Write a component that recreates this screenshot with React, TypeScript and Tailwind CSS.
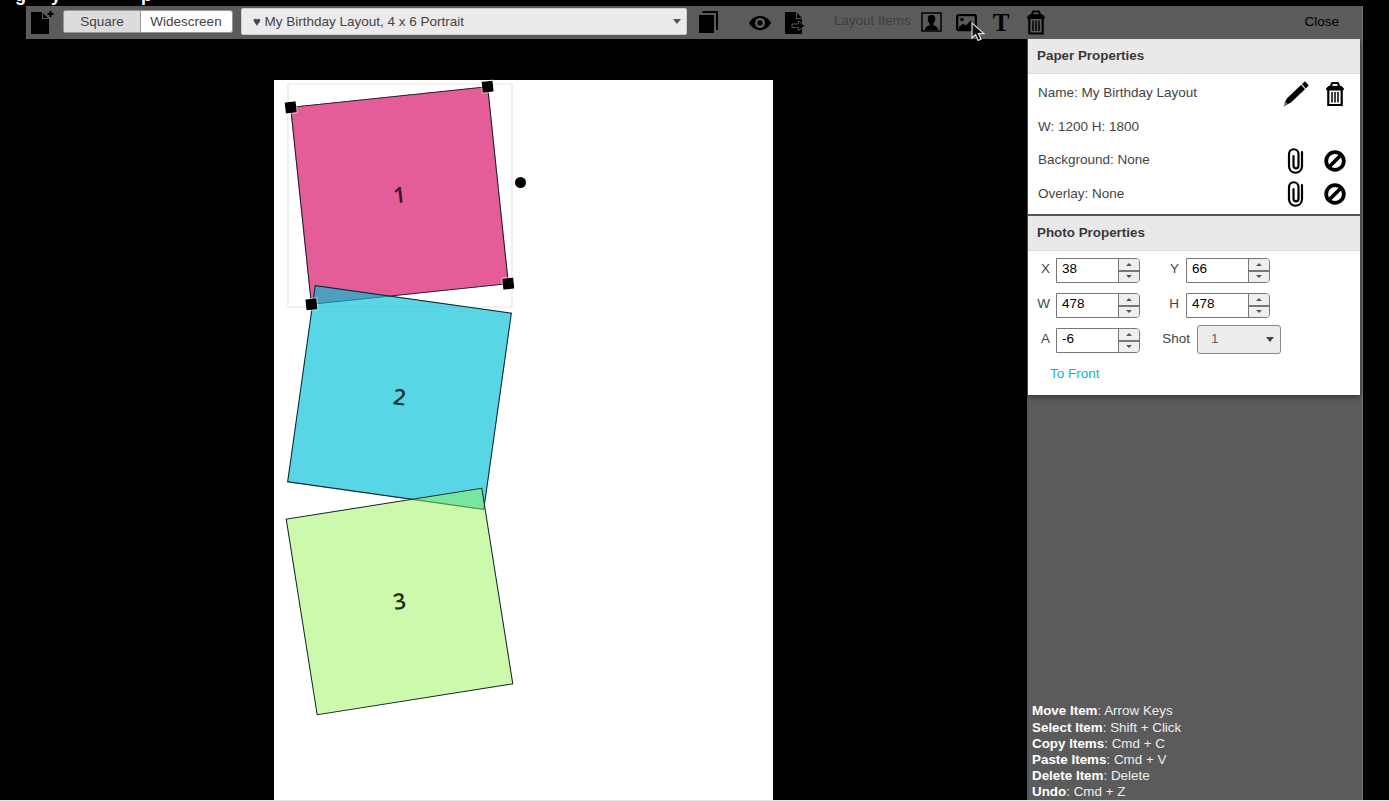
import type { ReactNode } from 'react';
import { clsx } from 'clsx';

type Photo = {
  shot: number;
  box: string;
  fill: string;
  label: string;
};

const photos: Photo[] = [
  { shot: 1, box: 'left-[26px] top-[16px] -rotate-6', fill: 'bg-[#e55d98]', label: 'text-[#3d1228]' },
  { shot: 2, box: 'left-[26px] top-[218px] rotate-8', fill: 'bg-[#00c0d8]/65', label: 'text-[#0b3338]' },
  { shot: 3, box: 'left-[26px] top-[422px] -rotate-9', fill: 'bg-[#9cf45a]/50', label: 'text-[#1c2b12]' },
];

const shortcuts = [
  ['Move Item', 'Arrow Keys'],
  ['Select Item', 'Shift + Click'],
  ['Copy Items', 'Cmd + C'],
  ['Paste Items', 'Cmd + V'],
  ['Delete Item', 'Delete'],
  ['Undo', 'Cmd + Z'],
];

export default function App() {
  return (
    <div className="flex h-[801px] w-[1389px] flex-col overflow-hidden border-b border-[#e4e4e4] bg-black font-['Liberation_Sans',Arial,sans-serif] text-[13.5px] text-[#444]">
      {/* Tail end of the page title, scrolled off the top */}
      <div className="flex h-[6px] shrink-0 items-end overflow-hidden pb-[2px] pl-[15px] text-[18px] leading-[18px] font-bold text-white">
        <span className="w-[36px]">g</span>
        <span className="w-[90px]">y</span>
        <span>p</span>
      </div>
      <div className="ml-[26px] flex min-h-0 w-[1337px] flex-1 flex-col border-r border-[#777]">
        <Toolbar />
        <div className="flex min-h-0 flex-1">
          <Canvas />
          <Sidebar />
        </div>
      </div>
    </div>
  );
}

function Toolbar() {
  return (
    <header className="relative flex h-[33px] shrink-0 items-center bg-[#5b5b5b] pb-[2px] text-black">
      <NewPageIcon className="mt-px ml-[4px] h-[25px] w-[25px]" />
      <div className="ml-[8px] flex h-[23px] w-[170px] overflow-hidden rounded-[3px] border border-[#999] bg-white leading-[21px] text-[#444]">
        <button className="w-[77px] border-r border-[#999] bg-[#dcdcdc]">Square</button>
        <button className="flex-1 pr-px">Widescreen</button>
      </div>
      <button className="ml-[8px] flex h-[27px] w-[446px] items-center justify-between rounded-[2px] border border-[#ccc] bg-[#ebebeb] pr-[5px] pl-[11px] text-[#444]">
        <span className="pt-px"><span className="text-[13px]">♥</span> My Birthday Layout, 4 x 6 Portrait</span>
        <Caret className="h-[5px] w-[8px] text-[#555]" />
      </button>
      <CopyIcon className="mt-px ml-[11px] h-[24px] w-[22px]" />
      <EyeIcon className="mt-[2px] ml-[28px] h-[18px] w-[24px]" />
      <ExportIcon className="mt-[2px] ml-[12px] h-[24px] w-[22px]" />
      <span className="ml-[28px] w-[87px] text-[13.4px] text-[#3e3e3e]">Layout Items</span>
      <PortraitIcon className="mt-px h-[20px] w-[21px]" />
      <ImageIcon className="mt-[2px] ml-[14px] h-[19px] w-[21px]" />
      <span className="mt-[3px] ml-[14px] w-[20px] text-center font-['Liberation_Serif',serif] text-[25px] leading-[24px] font-bold">T</span>
      <TrashIcon className="mt-[2px] ml-[16px] h-[25px] w-[18px]" />
      <button className="mt-px mr-[23px] ml-auto">Close</button>
      <svg className="absolute top-[16px] left-[945px] h-[20px] w-[14px]" viewBox="0 0 14 20">
        <path d="M1 1v15l3.6-3.4L7 18.4l3-1.2-2.5-5.6H13z" fill="#111" stroke="#ddd" strokeWidth="1.2" />
      </svg>
    </header>
  );
}

function Canvas() {
  return (
    <main className="min-w-0 flex-1 pt-[41px] pl-[248px]">
      <div className="relative h-full w-[499px] bg-white">
        {photos.map((photo) => (
          <div
            key={photo.shot}
            className={clsx(
              'absolute flex h-[199px] w-[199px] items-center justify-center border border-[#12222a]',
              photo.box,
              photo.fill
            )}
          >
            <span className={clsx("pb-[4px] font-['Open_Sans',sans-serif] text-[22px] leading-none font-semibold", photo.label)}>
              {photo.shot}
            </span>
          </div>
        ))}
        <div className="absolute top-[3px] left-[13px] h-[225px] w-[226px] border-2 border-[#888]/12" />
        {/* Handles follow the rotation of the selected photo */}
        <div className="absolute top-[16px] left-[26px] h-[199px] w-[199px] -rotate-6">
          <Handle className="-top-[5px] -left-[5px]" />
          <Handle className="-top-[5px] -right-[5px]" />
          <Handle className="-bottom-[5px] -left-[5px]" />
          <Handle className="-right-[5px] -bottom-[5px]" />
        </div>
        <div className="absolute top-[97px] left-[241px] h-[11px] w-[11px] rounded-full bg-black" />
      </div>
    </main>
  );
}

function Handle({ className }: { className: string }) {
  return <div className={clsx('absolute h-[11px] w-[11px] bg-black outline-1 outline-white/50', className)} />;
}

function Sidebar() {
  return (
    <aside className="flex w-[335px] shrink-0 flex-col border-l border-[#555] bg-[#5b5b5b]">
      <div className="h-[356px] w-[332px] bg-white shadow-[0_2px_6px_rgba(0,0,0,0.45)]">
        <PanelTitle>Paper Properties</PanelTitle>
        <div className="flex h-[142px] flex-col border-b-2 border-[#555] pt-[3px] pl-[10px]">
          <PropertyRow label="Name: My Birthday Layout">
            <PencilIcon className="h-[26px] w-[26px]" />
            <TrashIcon className="ml-px h-[26px] w-[18px]" />
          </PropertyRow>
          <PropertyRow label="W: 1200 H: 1800" />
          <PropertyRow label="Background: None">
            <ClipIcon className="h-[26px] w-[17px]" />
            <BanIcon className="h-[22px] w-[22px]" />
          </PropertyRow>
          <PropertyRow label="Overlay: None">
            <ClipIcon className="h-[26px] w-[17px]" />
            <BanIcon className="h-[22px] w-[22px]" />
          </PropertyRow>
        </div>
        <PanelTitle>Photo Properties</PanelTitle>
        <div className="grid grid-cols-[112px_1fr] gap-y-[10px] pt-[7px]">
          <Spinner label="X" value="38" />
          <Spinner label="Y" value="66" wide />
          <Spinner label="W" value="478" />
          <Spinner label="H" value="478" wide />
          <Spinner label="A" value="-6" />
          <div className="flex h-[25px] items-center">
            <span className="w-[57px] pr-[7px] pb-[2px] text-right">Shot</span>
            <button className="relative -top-px flex h-[29px] w-[84px] items-center justify-between rounded-[3px] border border-[#888] bg-[#ececec] pr-[6px] pl-[13px] text-[#666]">
              1
              <Caret className="h-[5px] w-[8px] text-[#444]" />
            </button>
          </div>
        </div>
        <button className="mt-[11px] ml-[22px] block leading-[20px] text-[#12b5c8]">To Front</button>
      </div>
      <div className="mt-auto pl-[4px] text-[13.4px] leading-[16.1px] text-[#eee]">
        {shortcuts.map(([action, keys]) => (
          <p key={action}>
            <b className="text-white">{action}</b>: {keys}
          </p>
        ))}
      </div>
    </aside>
  );
}

function PanelTitle({ children }: { children: ReactNode }) {
  return (
    <h2 className="h-[35px] border-b border-[#ddd] bg-[#e9e9ea] pl-[9px] text-[13.4px] leading-[34px] font-bold text-[#3a3a3a]">
      {children}
    </h2>
  );
}

function PropertyRow({ label, children }: { label: string; children?: ReactNode }) {
  return (
    <div className="flex h-[33.5px] items-center">
      <span className="flex-1 pb-px">{label}</span>
      {children && (
        <div className="mr-[6px] grid grid-cols-[39px_39px] place-items-center text-black">{children}</div>
      )}
    </div>
  );
}

function Spinner({ label, value, wide }: { label: string; value: string; wide?: boolean }) {
  return (
    <div className="flex h-[25px] items-center">
      <span className={clsx('pb-[2px] text-right', wide ? 'w-[40px] pr-px' : 'w-[28px] pr-[6px]')}>{label}</span>
      <div
        className={clsx(
          'flex h-[25px] w-[84px] overflow-hidden rounded-r-[4px] border border-[#777] bg-white',
          wide && 'ml-[6px]'
        )}
      >
        <span className="flex-1 pl-[5px] leading-[20px] text-black">{value}</span>
        <div className="flex w-[21px] flex-col border-l border-[#777] bg-[#eee] text-[#555]">
          <span className="flex flex-1 items-center justify-center border-b-2 border-[#777]">
            <Caret className="h-[3px] w-[6px] rotate-180" />
          </span>
          <span className="flex flex-1 items-center justify-center">
            <Caret className="h-[3px] w-[6px]" />
          </span>
        </div>
      </div>
    </div>
  );
}

type IconProps = { className?: string };

function Caret({ className }: IconProps) {
  return (
    <svg className={className} viewBox="0 0 8 5" preserveAspectRatio="none" fill="currentColor">
      <path d="M0 0h8L4 5z" />
    </svg>
  );
}

function NewPageIcon({ className }: IconProps) {
  return (
    <svg className={className} viewBox="0 0 25 25" fill="currentColor">
      <path d="M1 2h11v7h7v15H1zM13 3l5 5h-5zM19.500 1h2v2h2v2h-2v2h-2V5h-2V3h2z" />
    </svg>
  );
}

function CopyIcon({ className }: IconProps) {
  return (
    <svg className={className} viewBox="0 0 22 24" fill="currentColor">
      <path d="M1 5h15v18H1z" />
      <path d="M4.500 2h14.500V20" fill="none" stroke="currentColor" strokeWidth="2" />
      <path d="M3 4.200h14V20" fill="none" stroke="#5b5b5b" strokeWidth=".6" />
    </svg>
  );
}

function EyeIcon({ className }: IconProps) {
  return (
    <svg className={className} viewBox="0 0 24 18">
      <path d="M1 9C6-.5 18-.5 23 9 18 18.500 6 18.500 1 9z" fill="currentColor" />
      <circle cx="12" cy="9" r="4.800" fill="#777" />
      <circle cx="12" cy="9" r="2.900" fill="currentColor" />
    </svg>
  );
}

function ExportIcon({ className }: IconProps) {
  return (
    <svg className={className} viewBox="0 0 22 24">
      <path d="M1 1h11v7h6v15H1z" fill="currentColor" />
      <path d="M13 1.500L18 7h-5z" fill="currentColor" />
      <path d="M8 13h6.500v-3l6.500 4.800-6.500 4.800v-3H8z" fill="currentColor" stroke="#5b5b5b" strokeWidth=".9" />
    </svg>
  );
}

function PortraitIcon({ className }: IconProps) {
  return (
    <svg className={className} viewBox="0 0 21 20">
      <rect x="1" y="1" width="19" height="18" fill="none" stroke="currentColor" strokeWidth="1.500" />
      <path d="M10.500 3c3 0 4 2 3.700 4.500-.2 2-.8 3-1.700 4v1.800c1.500.8 4 1 4.800 4.700H3.700c.8-3.700 3.300-3.900 4.800-4.700v-1.800c-.9-1-1.500-2-1.700-4C6.500 5 7.500 3 10.500 3z" fill="currentColor" />
    </svg>
  );
}

function ImageIcon({ className }: IconProps) {
  return (
    <svg className={className} viewBox="0 0 21 19">
      <rect x="1.200" y="2.200" width="18.600" height="15" rx="1.500" fill="none" stroke="currentColor" strokeWidth="2.300" />
      <circle cx="6" cy="6.500" r="1.800" fill="currentColor" />
      <path d="M3 14l4-3.500 3 2 4.500-5 4 3.500v5H3z" fill="currentColor" />
    </svg>
  );
}

function TrashIcon({ className }: IconProps) {
  return (
    <svg className={className} viewBox="0 0 18 25" fill="none" stroke="currentColor">
      <path d="M4.500 5.500L6.200 1.600h5.600l1.700 3.900" strokeWidth="2" />
      <path d="M.8 8.500V6.500L3 4.800h12l2.200 1.700v2z" fill="currentColor" strokeWidth="1" />
      <path d="M2.300 8v15.500h13.400V8" strokeWidth="2.200" />
      <path d="M6 10.500v10.500M9 10.500v10.500M12 10.500v10.500" strokeWidth="1.500" />
    </svg>
  );
}

function PencilIcon({ className }: IconProps) {
  return (
    <svg className={className} viewBox="0 0 26 26" fill="currentColor">
      <path d="M19 3L22 .3l3.700 4.200-3 2.900zM18.200 3.800l3.800 4.400L8 21.500l-4.500 2.300-2-2L4.300 17z" />
      <path d="M2.500 20.500l2.500 2.500L.5 26z" fill="#666" />
    </svg>
  );
}

function ClipIcon({ className }: IconProps) {
  return (
    <svg className={className} viewBox="0 0 17 26" fill="none" stroke="currentColor" strokeWidth="2.200" strokeLinecap="round">
      <path d="M15 4v14c0 9-13 9-13 0V6.500c0-7 9.500-7 9.500 0v11c0 3.800-5 3.800-5 0V8" />
    </svg>
  );
}

function BanIcon({ className }: IconProps) {
  return (
    <svg className={className} viewBox="0 0 22 22" fill="none" stroke="currentColor" strokeWidth="3.800">
      <circle cx="11" cy="11" r="8.800" />
      <path d="M5.500 16.500l11-11" />
    </svg>
  );
}
